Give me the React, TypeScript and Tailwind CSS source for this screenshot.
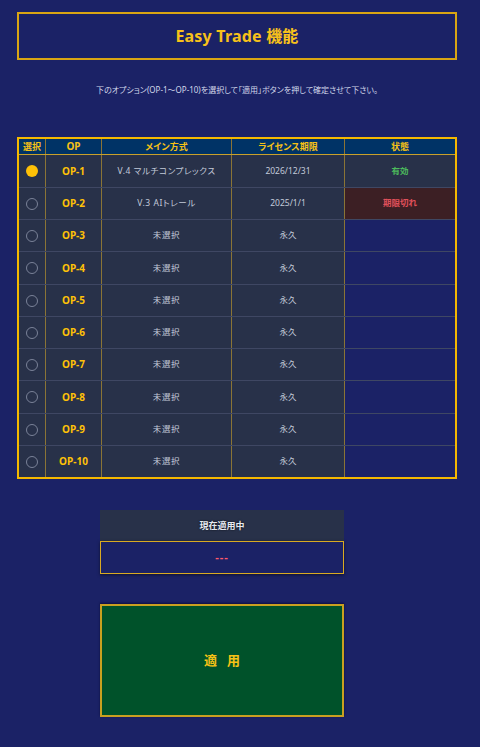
import React from "react";

type Row = {
  op: string;
  main: string;
  limit: string;
  status?: "ok" | "expired";
  selected?: boolean;
};

const rows: Row[] = [
  { op: "OP-1", main: "V.4 マルチコンプレックス", limit: "2026/12/31", status: "ok", selected: true },
  { op: "OP-2", main: "V.3 AIトレール", limit: "2025/1/1", status: "expired" },
  { op: "OP-3", main: "未選択", limit: "永久" },
  { op: "OP-4", main: "未選択", limit: "永久" },
  { op: "OP-5", main: "未選択", limit: "永久" },
  { op: "OP-6", main: "未選択", limit: "永久" },
  { op: "OP-7", main: "未選択", limit: "永久" },
  { op: "OP-8", main: "未選択", limit: "永久" },
  { op: "OP-9", main: "未選択", limit: "永久" },
  { op: "OP-10", main: "未選択", limit: "永久" },
];

const font = "font-['Noto_Sans','Noto_Sans_CJK_JP',sans-serif] [font-feature-settings:'palt']";
const cols = "grid grid-cols-[26px_56px_130px_113px_111px]";
const cell = "flex items-center justify-center border-l border-[#8a7436]";

export default function App() {
  return (
    <div className={`min-h-[747px] bg-[#1b2266] pt-3 pb-8 ${font}`}>
      <div className="ml-[17px] w-[440px]">
        {/* タイトル */}
        <div className="h-12 border-2 border-[#d9a514] flex items-center justify-center">
          <h1 className="text-[16px] font-bold text-[#f7c11a] tracking-[0.2px]">Easy Trade 機能</h1>
        </div>

        <p className="mt-[24px] text-center text-[8px] text-[#d2d8ea]">
          下のオプション(OP-1～OP-10)を選択して「適用」ボタンを押して確定させて下さい。
        </p>

        {/* オプション一覧 */}
        <div className="mt-[41px] border-2 border-[#f5b800]">
          <div className={`${cols} h-[16px] bg-[#003366] border-b border-[#c9a12a] text-[9px] font-bold text-[#f5c116]`}>
            <div className="flex items-center justify-center">選択</div>
            <div className={`${cell} text-[10px]`}>OP</div>
            <div className={cell}>メイン方式</div>
            <div className={cell}>ライセンス期限</div>
            <div className={cell}>状態</div>
          </div>
          {rows.map((r, i) => (
            <div
              key={r.op}
              className={`${cols} ${i === 3 || i === 7 ? "h-[33px]" : "h-[32px]"} text-[8.5px] text-[#c3cad9] ${i > 0 ? "border-t border-[#3f4763]" : ""}`}
            >
              <div className="flex items-center justify-center bg-[#283149]">
                {r.selected ? (
                  <span className="w-3 h-3 rounded-full bg-[#ffc107]" />
                ) : (
                  <span className="w-3 h-3 rounded-full border border-[#7a8298]" />
                )}
              </div>
              <div className={`${cell} bg-[#283149] text-[10px] font-bold text-[#ffc107]`}>{r.op}</div>
              <div className={`${cell} bg-[#283149] tracking-[0.6px]`}>{r.main}</div>
              <div className={`${cell} bg-[#283149]`}>{r.limit}</div>
              {r.status === "ok" ? (
                <div className={`${cell} bg-[#283149] font-bold text-[#4cbb5c]`}>有効</div>
              ) : r.status === "expired" ? (
                <div className={`${cell} bg-[#3c1f24] font-bold text-[#e0505a]`}>期限切れ</div>
              ) : (
                <div className={`${cell} bg-[#1b2266]`} />
              )}
            </div>
          ))}
        </div>

        {/* 現在適用中 */}
        <div className="ml-[83px] w-[244px] mt-[31px]">
          <div className="h-[31px] bg-[#283149] flex items-center justify-center text-[9px] font-bold text-[#e6e9f0] [text-shadow:0_0_2px_rgba(0,0,0,0.8)]">
            現在適用中
          </div>
          <div className="h-[33px] border-[1.5px] border-[#d9aa22] bg-[#1b2266] flex items-center justify-center shadow-[0_1px_3px_rgba(0,0,0,0.5)]">
            <span className="text-[11px] font-bold text-[#ff5a6a] tracking-[1px]">---</span>
          </div>
        </div>

        {/* 適用ボタン */}
        <button className="ml-[83px] mt-[30px] w-[244px] h-[113px] border-2 border-[#c9a020] bg-[#00522a] flex items-center justify-center shadow-[0_-1px_2px_rgba(0,0,40,0.6)]">
          <span className="text-[13px] font-bold text-[#f5c116] tracking-[10px] pl-[10px]">適用</span>
        </button>
      </div>
    </div>
  );
}
